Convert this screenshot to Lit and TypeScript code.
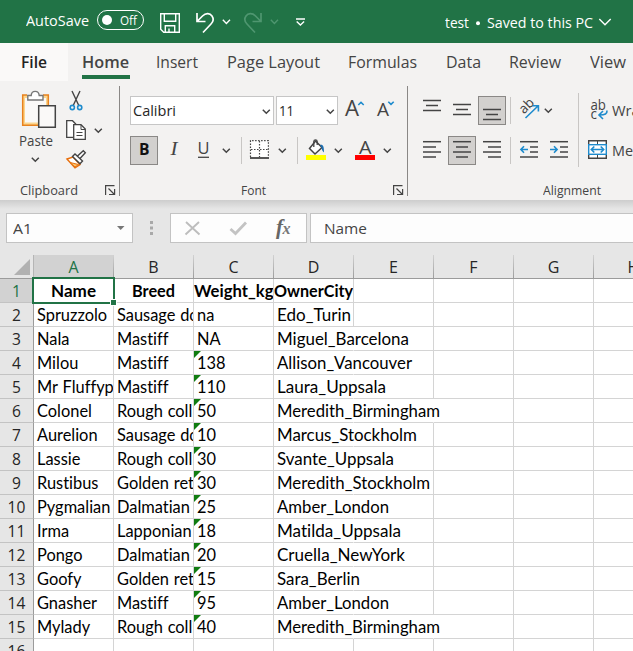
import { LitElement, html, svg, css, nothing } from "lit";
import { customElement, property } from "lit/decorators.js";

/** A one-line label whose glyphs are condensed or widened to a given width. */
@customElement("fit-label")
class FitLabel extends LitElement {
  @property() text = "";
  @property({ type: Number }) w = 0;
  @property({ type: Number }) ratio = 0;

  static styles = css`
    :host { display: block; white-space: pre; }
    .glyphs { display: inline-block; transform-origin: 0 50%; }
  `;

  firstUpdated() {
    const el = this.renderRoot.querySelector(".glyphs") as HTMLElement;
    const ratio = this.ratio || this.w / el.getBoundingClientRect().width;
    el.style.transform = `scaleX(${ratio})`;
    if (this.w) this.style.width = `${this.w}px`;
  }

  render() {
    return html`<span class="glyphs">${this.text}</span>`;
  }
}

const label = (text: string, w: number, cls = "") =>
  html`<fit-label class=${cls} .text=${text} .w=${w}></fit-label>`;

/** An icon whose view box starts at (x, y) on the window's own pixel grid. */
const icon = (x: number, y: number, w: number, h: number, body: unknown, cls = "") =>
  html`<svg class="icon ${cls}" width=${w} height=${h} viewBox="${x} ${y} ${w} ${h}">${body}</svg>`;

const chevron = (x: number, y: number) =>
  svg`<path class="ln" stroke-width="1.5" d="M${x - 3.5} ${y - 1.8}l3.5 3.5l3.5 -3.5"/>`;

const lines = (rows: [number, number, number][]) =>
  rows.map(([x1, x2, y]) => svg`<path class="ln" stroke-width="1.5" d="M${x1} ${y}H${x2}"/>`);

const launcher = (x: number) =>
  icon(x, 184, 12, 12, svg`<g fill="none" stroke="#444" stroke-width="1.2">
    <path d="M${x + 0.6} 195V185.6H${x + 9.5}M${x + 3.5} 188.5L${x + 9} 194M${x + 9.6} 189V194.5H${x + 4}"/></g>`);

const TABS: [string, number, string][] = [
  ["Home", 47, "home"], ["Insert", 42, ""], ["Page Layout", 93, ""], ["Formulas", 69, ""],
  ["Data", 35, ""], ["Review", 52, ""], ["View", 36, ""],
];

const COLS = ["A", "B", "C", "D", "E", "F", "G", "H"];

const HEADINGS = ["Name", "Breed", "Weight_kg", "OwnerCity"];
const HEADING_WIDTHS = [45, 43, 79.5, 79];

const ROWS: string[][] = [
  HEADINGS,
  ["Spruzzolo", "Sausage dog", "na", "Edo_Turin"],
  ["Nala", "Mastiff", "NA", "Miguel_Barcelona"],
  ["Milou", "Mastiff", "138", "Allison_Vancouver"],
  ["Mr Fluffypants", "Mastiff", "110", "Laura_Uppsala"],
  ["Colonel", "Rough collie", "50", "Meredith_Birmingham"],
  ["Aurelion", "Sausage dog", "10", "Marcus_Stockholm"],
  ["Lassie", "Rough collie", "30", "Svante_Uppsala"],
  ["Rustibus", "Golden retriever", "30", "Meredith_Stockholm"],
  ["Pygmalian", "Dalmatian", "25", "Amber_London"],
  ["Irma", "Lapponian herder", "18", "Matilda_Uppsala"],
  ["Pongo", "Dalmatian", "20", "Cruella_NewYork"],
  ["Goofy", "Golden retriever", "15", "Sara_Berlin"],
  ["Gnasher", "Mastiff", "95", "Amber_London"],
  ["Mylady", "Rough collie", "40", "Meredith_Birmingham"],
  [],
];

const OWNER_WIDTHS: Record<string, number> = {
  Edo_Turin: 74, Miguel_Barcelona: 132, Allison_Vancouver: 135, Laura_Uppsala: 109,
  Meredith_Birmingham: 163, Marcus_Stockholm: 140, Svante_Uppsala: 117, Meredith_Stockholm: 153,
  Amber_London: 112, Matilda_Uppsala: 124, Cruella_NewYork: 128, Sara_Berlin: 83,
};

@customElement("app-root")
class AppRoot extends LitElement {
  static styles = css`
    :host {
      display: flex; flex-direction: column; width: 633px; height: 651px; overflow: hidden;
      background: #e6e6e6; color: #444; font: 15px/20px "Open Sans", "Noto Sans", sans-serif;
    }
    * { box-sizing: border-box; }
    .icon { display: block; flex: none; overflow: visible; }
    .ln { fill: none; stroke: #444; }
    .bl { fill: none; stroke: #1e8bcd; stroke-width: 1.6; }

    .title { flex: none; height: 43px; background: #217346; color: #fff; display: flex; padding-left: 26px; font-size: 15px; }
    .title .auto { margin-top: 10px; }
    .toggle { width: 47px; height: 20px; margin: 10px 0 0 8px; border: 1px solid #fff; border-radius: 10px;
      display: flex; align-items: center; gap: 8px; padding-left: 4px; font-size: 12.5px; flex: none; }
    .toggle fit-label { margin-top: 1px; }
    .knob { width: 10px; height: 10px; border-radius: 50%; background: #fff; flex: none; }
    .title .quick { margin-left: 14px; }
    .title .doc { margin: 12px 0 0 135px; font-size: 14.6px; }
    .title .saved { margin: 12px 0 0; font-size: 14.6px; }

    .tabs { flex: none; height: 41px; background: #f3f2f1; display: flex; font-size: 17px; }
    .file { width: 68px; height: 38px; background: #faf9f8; color: #222; padding: 9px 0 0 21px; font-weight: 600; flex: none; }
    .list { display: flex; gap: 28.6px; padding-left: 14px; }
    .tab { padding-top: 9px; height: 36px; flex: none; }
    .tab.home { font-weight: 600; border-bottom: 4px solid #217346; width: 48px; margin-right: -2.5px; }

    .ribbon { flex: none; height: 116px; background: #f3f2f1; display: flex; font-size: 14px; }
    .group { display: flex; flex-direction: column; flex: none; }
    .clip { width: 120px; border-right: 1px solid #8a8886; margin: 2px 0 4px; height: 110px; }
    .clip .tools { height: 93px; display: flex; }
    .paste { width: 66px; display: flex; flex-direction: column; }
    .paste .name { margin: 1px 0 0 19px; }
    .small { display: flex; flex-direction: column; }
    .foot { display: flex; line-height: 20px; font-size: 12.7px; }
    .clip .foot { padding: 1px 0 0 20px; gap: 27px; }
    .clip .foot .icon, .font .foot .icon { margin-top: 4px; }
    .font { width: 288px; padding-left: 10px; border-right: 1px solid #8a8886; margin: 2px 0 4px; height: 110px; }
    .row { display: flex; align-items: flex-start; height: 40px; flex: none; }
    .tools, .foot { flex: none; }
    .font .row:first-child { margin-top: 10px; }
    .align .row:first-child { margin-top: 12px; }
    .combo { height: 29px; background: #fff; border: 1px solid #c6c6c6; display: flex; justify-content: space-between;
      padding: 4px 2px 0 2px; font-size: 14.5px; color: #262626; flex: none; }
    .family { width: 144px; margin-right: 2px; }
    .size { width: 62px; margin-right: 6px; }
    .font .foot { padding: 4px 0 0 111px; gap: 127px; }
    .align { width: 225px; padding-left: 10px; overflow: hidden; }
    .align .foot { padding: 4px 0 0 125px; }
    .align .word { margin: 4px 0 0 4px; font-size: 15px; }
    .glyph { font-family: "Open Sans", sans-serif; fill: #444; }
    .serif { font-family: "Liberation Serif", serif; font-style: italic; }

    .formula { flex: none; height: 55px; padding: 13px 0 0 6px; display: flex;
      background: linear-gradient(#cdcdcd, #e6e6e6 9px); }
    .field { height: 30px; background: #fdfdfd; border: 1px solid #c3c3c3; display: flex; flex: none; }
    .namebox { width: 127px; padding: 4px 6px 0 6px; justify-content: space-between; }
    .actions { width: 137px; margin-right: 3px; }
    .value { width: 330px; padding: 4px 0 0 13px; }

    .heads { flex: none; height: 24px; display: flex; font-size: 16px; line-height: 24px; color: #262626;
      border-bottom: 1px solid #9b9b9b; width: 674px; }
    .corner { width: 34px; height: 23px; flex: none; border-right: 1px solid #b5b5b5; }
    .head { width: 80px; flex: none; text-align: center; border-right: 1px solid;
      border-image: linear-gradient(#d4d4d4, #9b9b9b) 1; }
    .head.on { background: #d2d2d2; color: #217346; }
    .sheet { position: relative; flex: none; width: 674px; font: 16.4px/24px Lato, sans-serif; color: #000; background: #fff;
      font-variant-ligatures: none; }
    .line { display: flex; height: 24px; }
    .num { width: 34px; flex: none; text-align: center; background: #e6e6e6; color: #262626;
      border-right: 1px solid #9b9b9b; border-bottom: 1px solid #c3c3c3; font: 15.6px/24px "Open Sans", sans-serif; }
    .num.on { background: #d2d2d2; color: #217346; }
    .cell { width: 80px; flex: none; border-right: 1px solid #d4d4d4; border-bottom: 1px solid #d4d4d4;
      padding-left: 3px; white-space: pre; overflow: hidden; line-height: 24px; word-spacing: 0.6px; position: relative; }
    .cell.spill { overflow: visible; border-right-color: transparent; }
    .cell.open { border-right-color: transparent; }
    .cell.bold { font-weight: 700; padding: 0; display: flex; justify-content: center; }
    .cell.flag::before { content: ""; position: absolute; left: 0; top: 0; border-top: 7px solid #107c10; border-right: 7px solid transparent; }
    .cursor { position: absolute; left: 32px; top: -2px; width: 83px; height: 27px; border: 2px solid #217346; }
    .handle { position: absolute; left: 110px; top: 20px; width: 7px; height: 7px; background: #217346; border: 1px solid #fff; }
  `;

  private title() {
    return html`<div class="title">
      ${label("AutoSave", 63, "auto")}
      <div class="toggle"><span class="knob"></span>${label("Off", 17)}</div>
      ${icon(158, 0, 152, 43, svg`<g fill="none" stroke="#fff" stroke-width="1.4">
        <path d="M160.7 13.7H179.3V32.3H163.7L160.7 29.3ZM164.3 13.7V21.3H175.7V13.7M165.3 32V25.7H174.7V32M169 32V28.5"/>
        <path stroke-width="1.7" d="M197 13V21.5H205.5M197.5 21L202.5 16C206 12.6 210 13.3 212 16C214 19 213.2 21.8 211 24L203 32.5"/>
        <path d="M222.8 19.8l3.6 3.6l3.6 -3.6"/>
        <g stroke="#4f9670"><path stroke-width="1.7" d="M261 13V21.5H252.5M260.5 21L255.5 16C252 12.6 248 13.3 246 16C244 19 244.8 21.8 247 24L255 32.5"/>
        <path d="M270.8 19.8l3.6 3.6l3.6 -3.6"/></g>
        <path d="M296 19H305M296.7 21.6l3.7 3.5l3.7 -3.5"/></g>`, "quick")}
      ${label("test", 24, "doc")}
      ${icon(469, 0, 18, 43, svg`<circle cx="478" cy="23.3" r="2" fill="#fff"/>`)}
      ${label("Saved to this PC", 106, "saved")}
      ${icon(593, 0, 24, 43, svg`<path fill="none" stroke="#fff" stroke-width="1.4" d="M599.3 19l5.7 5.7l5.7 -5.7"/>`)}
    </div>`;
  }

  private tabs() {
    return html`<div class="tabs"><div class="file">${label("File", 26)}</div>
      <div class="list">${TABS.map(([t, w, c]) => html`<div class="tab ${c}">${label(t, w)}</div>`)}</div></div>`;
  }

  private clipboard() {
    return html`<div class="group clip"><div class="tools">
      <div class="paste">
        ${icon(0, 86, 66, 44, svg`
          <path d="M23.5 96.5H47.5V124H23.5Z" fill="#faf9f8" stroke="#fbd58d" stroke-width="3"/>
          <path d="M27 95H22.7V125.3H38M43 95H48.3V105" fill="none" stroke="#e8821e" stroke-width="1.5"/>
          <path d="M27.8 100V95.5H31.2C31.5 90 38.8 90 39.2 95.5H43V100Z" fill="#fff" stroke="#777" stroke-width="1.4"/>
          <path d="M38.7 105.7H55.3V127.3H38.7Z" fill="#faf9f8" stroke="#444" stroke-width="1.5"/>`)}
        ${label("Paste", 34, "name")}
        ${icon(0, 151, 66, 16, chevron(35.3, 159.5))}
      </div>
      <div class="small">
        ${icon(66, 86, 40, 30, svg`
          <path class="ln" stroke-width="1.4" d="M72 91L78.8 105.5M80 91L73.2 105.5"/>
          <g class="bl"><circle cx="72.3" cy="107.5" r="2.1"/><circle cx="79.7" cy="107.5" r="2.1"/></g>`)}
        ${icon(66, 116, 40, 30, svg`
          <path d="M73 137.3H66.7V120.7H72.5L76 124.2" fill="#fff" stroke="#444" stroke-width="1.3"/>
          <path d="M73.7 124.7H81L85.3 129V139.3H73.7Z" fill="#fff" stroke="#444" stroke-width="1.3"/>
          <path class="ln" d="M81 125V129.5H85M76.5 132.5H82.5M76.5 135.5H82.5"/>${chevron(98.3, 130.5)}`)}
        ${icon(66, 146, 40, 30, svg`
          <path d="M67 159L73 157L80 164.5L75 167.8Z" fill="#fff" stroke="#e8700e" stroke-width="1.4"/>
          <path d="M70 162.5L78.5 164.5L75 167Z" fill="#fbc56d" stroke="#e8700e" stroke-width="1"/>
          <path d="M77 156.5L83.3 150.7L85.3 152.7L79.5 159" fill="#fff" stroke="#444" stroke-width="1.4"/>
          <path d="M72.5 156.5L75 154L82.5 161L80 163.8Z" fill="#fff" stroke="#444" stroke-width="1.4"/>`)}
      </div></div>
      <div class="foot">${label("Clipboard", 58)}${launcher(105)}</div>
    </div>`;
  }

  private font() {
    const sep = (x: number) => svg`<path stroke="#c8c6c4" d="M${x} 137V164"/>`;
    return html`<div class="group font">
      <div class="row">
        <div class="combo family">${label("Calibri", 43)}${icon(261, 101, 10, 20, chevron(266.3, 111.5))}</div>
        <div class="combo size">${label("11", 15)}${icon(325, 101, 10, 20, chevron(330.3, 111.5))}</div>
        ${icon(344, 96, 54, 30, svg`
          <text class="glyph" x="345" y="116" font-size="21" textLength="14" lengthAdjust="spacingAndGlyphs">A</text>
          <text class="glyph" x="377" y="116" font-size="18" textLength="12" lengthAdjust="spacingAndGlyphs">A</text>
          <path class="bl" d="M358.3 105l2.7 -2.7l2.7 2.7M388.3 101.7l2.7 2.7l2.7 -2.7"/>`)}
      </div>
      <div class="row">
        ${icon(130, 136, 268, 30, svg`
          <rect x="130.5" y="136.5" width="27" height="28" fill="#d2d0ce" stroke="#8a8886"/>
          <text x="139" y="154.5" font-size="16.5" font-weight="700" fill="#111" textLength="10.5" lengthAdjust="spacingAndGlyphs">B</text>
          <text class="glyph serif" x="170.5" y="154.5" font-size="18.5" textLength="7" lengthAdjust="spacingAndGlyphs">I</text>
          <text class="glyph" x="197.5" y="154.3" font-size="16" textLength="12" lengthAdjust="spacingAndGlyphs">U</text>
          <path class="ln" stroke-width="1.3" d="M198 157.3H209"/>
          ${chevron(226.3, 150.5)}${sep(241.5)}
          <path d="M250.7 140.7H268.3V157H250.7Z" fill="#fff"/>
          <path class="ln" stroke-dasharray="1.5 1.5" stroke-width="1.2" d="M250.5 157V140.6H268.4V157M259.5 141V157M251 149.5H268"/>
          <path class="ln" stroke-width="1.8" d="M250 158H269"/>
          ${chevron(282.3, 150.5)}${sep(297.5)}
          <path d="M315.5 141L322 147.5L315 154L309.5 148.5Z" fill="#fff" stroke="#444" stroke-width="1.5"/>
          <path class="ln" stroke-width="1.3" d="M313.8 147V141.5C314 139.4 317 139.4 317.2 141.5V145"/>
          <path d="M320 145C323 144.3 324 146 324 152.5C322 151 321.8 149 321.5 147.5Z" fill="#1e6fb0"/>
          <rect x="306" y="155" width="20" height="5" fill="#ff0"/>
          ${chevron(338.3, 150.5)}
          <text class="glyph" x="359" y="153.5" font-size="18.5" textLength="12.5" lengthAdjust="spacingAndGlyphs">A</text>
          <rect x="355" y="155" width="20" height="5" fill="#f00"/>${chevron(387.3, 150.5)}`)}
      </div>
      <div class="foot">${label("Font", 25)}${launcher(393)}</div>
    </div>`;
  }

  private alignment() {
    return html`<div class="group align">
      <div class="row">
        ${icon(418, 96, 190, 30, svg`
          <rect x="478.5" y="96.5" width="27" height="28" fill="#d2d0ce" stroke="#8a8886"/>
          ${lines([[423, 441, 100.5], [426, 438, 105.5], [423, 441, 110.5], [453, 471, 104.5], [456, 468, 109.5], [453, 471, 114.5],
            [483, 501, 109.5], [486, 498, 114.5], [483, 501, 119.5]])}
          <path stroke="#c8c6c4" d="M510.5 97V124M578.5 93V167"/>
          <text class="glyph" font-size="13.5" transform="translate(524 114.5) rotate(-45)">ab</text>
          <path class="bl" d="M525.5 118L538 106M532.5 105.7H538.4V111.5"/>${chevron(548.3, 110.5)}
          <text class="glyph" x="590.5" y="110" font-size="14" textLength="15.5" lengthAdjust="spacingAndGlyphs">ab</text>
          <text class="glyph" x="590.5" y="118.5" font-size="14" textLength="6.5" lengthAdjust="spacingAndGlyphs">c</text>
          <path class="bl" d="M607 110.5C607.3 114 605 115 599.5 115M603 111L599 115L603 119"/>`)}
        <fit-label class="word" .text=${"Wrap Text"} .ratio=${0.98}></fit-label>
      </div>
      <div class="row">
        ${icon(418, 136, 190, 30, svg`
          <rect x="448.5" y="136.5" width="27" height="28" fill="#d2d0ce" stroke="#8a8886"/>
          ${lines([[423, 441, 141.7], [423, 436, 147], [423, 441, 152], [423, 436, 157],
            [453, 471, 141.7], [456, 468, 147], [453, 471, 152], [456, 468, 157],
            [483, 501, 141.7], [488, 501, 147], [483, 501, 152], [488, 501, 157],
            [520, 538, 141.7], [530, 538, 147], [530, 538, 152], [520, 538, 157],
            [550, 568, 141.7], [560, 568, 147], [560, 568, 152], [550, 568, 157]])}
          <path stroke="#c8c6c4" d="M510.5 137V164"/>
          <path class="bl" d="M521 149.5H528M524 146.3L520.9 149.5L524 152.7M550 149.5H557M554 146.3L557.1 149.5L554 152.7"/>
          <path d="M588.7 140.7H606.3V158.3H588.7Z" fill="#fff" stroke="#444" stroke-width="1.4"/>
          <path class="ln" d="M597.5 141V158"/>
          <rect x="588.7" y="144.7" width="17.6" height="9.6" fill="#fff" stroke="#1e8bcd" stroke-width="1.4"/>
          <path class="bl" d="M591.5 149.5H603.5M594.3 146.5L591.3 149.5L594.3 152.5M600.7 146.5L603.7 149.5L600.7 152.5"/>`)}
        <fit-label class="word" .text=${"Merge & Center"} .ratio=${0.96}></fit-label>
      </div>
      <div class="foot">${label("Alignment", 58)}</div>
    </div>`;
  }

  private formula() {
    return html`<div class="formula">
      <div class="field namebox">${label("A1", 19)}${icon(117, 218, 9, 18, svg`<path d="M117 226H124.5L120.7 230Z" fill="#777"/>`)}</div>
      ${icon(133, 213, 37, 30, svg`<path d="M150 221h3v3h-3zM150 226.5h3v3h-3zM150 232h3v3h-3z" fill="#a9a9a9"/>`)}
      <div class="field actions">${icon(171, 214, 135, 28, svg`
        <path d="M186 222L199.5 234.5M199 222L185.5 234.5" fill="none" stroke="#bdbdbd" stroke-width="1.9"/>
        <path d="M230.5 229L235.5 233.5L246 222.5" fill="none" stroke="#c3c3c3" stroke-width="2.8"/>
        <text class="serif" x="276" y="233.5" font-size="21" font-weight="700" fill="#666">f</text>
        <text class="serif" x="282.5" y="233.5" font-size="16" font-weight="700" fill="#777">x</text>`)}</div>
      <div class="field value">${label("Name", 43)}</div>
    </div>`;
  }

  private cell(row: number, col: number) {
    const text = ROWS[row][col];
    const owner = ROWS[row][3] ?? "";
    const cls = ["cell"];
    if (text && row === 0) cls.push("bold");
    if (col === 3 && row > 1 && text) cls.push("spill");
    if (col === 4 && owner.length > 18) cls.push("open");
    if (col === 2 && row > 2 && text) cls.push("flag");
    let body: unknown = text ?? nothing;
    if (text && row === 0) body = label(text, HEADING_WIDTHS[col]);
    else if (text && col === 3) body = label(text, OWNER_WIDTHS[text]);
    return html`<div class=${cls.join(" ")}>${body}</div>`;
  }

  render() {
    return html`
      ${this.title()}${this.tabs()}
      <div class="ribbon">${this.clipboard()}${this.font()}${this.alignment()}</div>
      ${this.formula()}
      <div class="heads">
        <div class="corner">${icon(0, 255, 33, 23, svg`<path d="M30 259V275H14Z" fill="#b1b1b1"/>`)}</div>
        ${COLS.map((c, i) => html`<div class="head ${i ? "" : "on"}">${c}</div>`)}
      </div>
      <div class="sheet">
        ${ROWS.map((_, r) => html`<div class="line"><div class="num ${r ? "" : "on"}">${r + 1}</div>
          ${COLS.map((_c, c) => this.cell(r, c))}</div>`)}
        <div class="cursor"></div><div class="handle"></div>
      </div>`;
  }
}
